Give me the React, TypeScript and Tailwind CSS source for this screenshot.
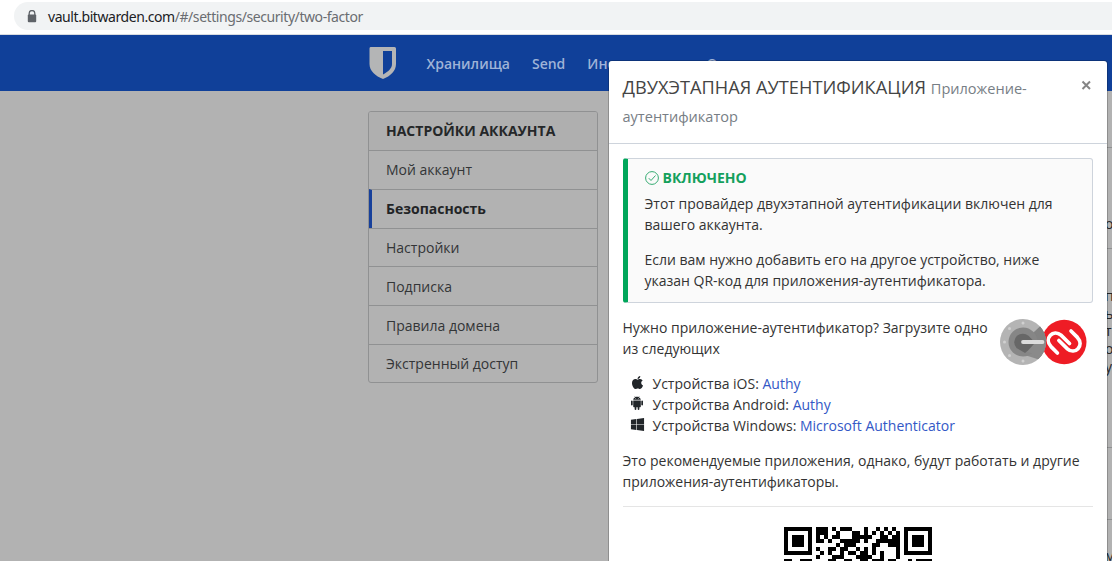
import React from "react";
import { FaApple, FaWindows } from "react-icons/fa";
import { AiFillAndroid } from "react-icons/ai";

const menu = ["Мой аккаунт", "Безопасность", "Настройки", "Подписка", "Правила домена", "Экстренный доступ"];

const qrRows = [
  "#######.###.#.###...#..#.#.#..#######",
  "#.....#.###..#...##.#.#.#.#.#.#.....#",
  "#.###.#.#.#.##...#####..##.##.#.###.#",
  "#.###.#.##.#..#####.#..######.#.###.#",
  "#.###.#......#.###....##..###.#.###.#",
  "#.....#.#..##.##..#.#.#.....#.#.....#",
  "#######..#.#..#.##.##.#.#...#.#######",
  "........#...###...####..#...#........",
  "##..###....##..##..##.###.##...#.####",
];

function QrCode() {
  return (
    <svg width="148" height="36" viewBox="0 0 37 9" shapeRendering="crispEdges" className="block">
      {qrRows.flatMap((row, y) =>
        row.split("").map((c, x) => (c === "#" ? <rect key={`${x}-${y}`} x={x} y={y} width="1" height="1" /> : null)),
      )}
    </svg>
  );
}

function AuthLogos() {
  return (
    <svg width="88" height="48" viewBox="0 0 88 48" className="block shrink-0">
      <circle cx="64.200" cy="24" r="22.300" fill="#ee1c25" />
      <circle cx="23" cy="24" r="23" fill="#b4b4b4" />
      <path d="M23 24L40 8.500A23 23 0 0 1 38 41.300L12 33Z" fill="#8a8a8a" />
      <path d="M31 24V17.500L40 8.500A23 23 0 0 1 46 24Z" fill="#828282" />
      <circle cx="23" cy="24" r="14.500" fill="#868686" />
      <path d="M16.500 30L31 24.500H46A23 23 0 0 1 38 41.300L31 35Z" fill="#8a8a8a" />
      <path d="M17 17.800A8.700 8.700 0 0 1 28.500 17.800L34 23.500V26L28 32.500L25 35L16.500 30A8.700 8.700 0 0 1 17 17.800Z" fill="#676767" />
      <g fill="#d0d0d0">
        <circle cx="23" cy="5" r="1.500" /><circle cx="9.500" cy="10.500" r="1.500" /><circle cx="4.500" cy="24" r="1.500" />
        <circle cx="9.500" cy="37.500" r="1.500" /><circle cx="23" cy="43" r="1.500" />
      </g>
      <path d="M23 24H42.500" stroke="#dcdcdc" strokeWidth="3.800" strokeLinecap="round" />
      <g fill="none" stroke="#fff" strokeWidth="3.700" strokeLinecap="round">
        <path d="M57.400 35L51 28.600C43.500 20.500 53.500 10.500 61 17.200L69.500 25.500" />
        <path d="M71 13L77.400 19.400C84.900 27.500 74.900 37.500 67.400 30.800L58.900 22.500" />
      </g>
    </svg>
  );
}

function Device({ icon, name, link }: { icon: React.ReactNode; name: string; link: string }) {
  return (
    <li className="flex h-[21px]">
      <span className="flex h-[18px] w-[30px] items-center justify-center pr-px text-[#212529]">{icon}</span>
      <span>{name}: <a className="text-[#3358c6]">{link}</a></span>
    </li>
  );
}

function TextLines({ lines }: { lines: string[] }) {
  return <>{lines.map((line, i) => <div key={i} className="h-[17.700px]">{line}</div>)}</>;
}

export default function App() {
  return (
    <div className="relative h-[561px] w-[1112px] overflow-hidden bg-[#b2b2b2] font-['Open_Sans','Noto_Sans',sans-serif] text-[14px] leading-[21px] text-[#333]">
      <div className="h-[35px] border-b border-[#d9dce0] bg-white pl-[14px] pt-[2px]">
        <div className="flex h-7 items-center rounded-l-full bg-[#f1f3f4] pl-[13px]">
          <svg width="10" height="13" viewBox="0 0 10 13" className="mr-[11px]">
            <path d="M2.200 5V3.300a2.800 2.800 0 0 1 5.600 0V5" fill="none" stroke="#5f6368" strokeWidth="1.300" />
            <rect x="0.800" y="4.600" width="8.400" height="7.600" rx="1" fill="#5f6368" />
          </svg>
          <span className="whitespace-nowrap font-['Noto_Sans',sans-serif] text-[14px] tracking-[-0.430px] text-[#6a6d71]">
            <span className="text-[#202124]">vault.bitwarden.com</span>/#/settings/security/two-factor
          </span>
        </div>
      </div>

      <header className="flex h-14 items-center bg-[#104099] pl-[369px] font-semibold text-[#9fb3d7]">
        <svg width="28" height="32" viewBox="0 0 28 32" className="mb-px mr-[29.500px]">
          <path fillRule="evenodd" d="M1.500 0h24q1.500 0 1.500 1.500V17c0 7-5.500 12-13 15C6.500 29 .5 24 .5 17V1.500Q.5 0 1.500 0ZM14 4V27.500c5-2.700 9-6 9-10.500V4Z" fill="#b4b5b6" />
        </svg>
        <nav className="flex gap-[22px] whitespace-nowrap">
          <span>Хранилища</span><span>Send</span><span>Инструменты</span><span>Отчеты</span>
        </nav>
      </header>

      <main className="flex justify-between pl-[368px]">
        <aside className="mt-5 h-[272px] w-[230px] overflow-hidden rounded-[3px] border border-[#909192]">
          <div className="flex h-[38px] items-center bg-[#afafaf] pb-[2px] pl-[17px] font-bold text-[#252729]">НАСТРОЙКИ АККАУНТА</div>
          {menu.map((m) => (
            <div key={m} className={m === "Безопасность"
              ? "flex h-[38.800px] items-center border-l-[3px] border-t border-l-[#17409b] border-t-[#909192] pl-[14px] font-bold text-[#222426]"
              : "flex h-[38.800px] items-center border-t border-[#909192] pl-[17px] text-[#333537]"}>{m}</div>
          ))}
        </aside>
        <section className="mt-[56px] flex w-[7px] flex-col overflow-hidden text-[14px] text-[#252729]">
          <div className="h-[101px] border-t border-[#909192] pt-[65px]">о</div>
          <div className="h-[199px] border-t border-[#909192] pt-[36px]"><TextLines lines={["п", "ь", "т", "о", "у"]} /></div>
          <div className="h-[72px] border-t border-[#909192]" />
          <div className="h-[42px] border-t border-[#909192] pt-[25px]">м</div>
        </section>
      </main>

      <div role="dialog" className="absolute left-[609px] top-[61px] h-[520px] w-[498px] rounded-t-[3px] bg-white shadow-[0_0_0_1px_rgba(0,0,0,0.2)]">
        <div className="flex h-[83px] items-start justify-between border-b border-[#ced4dc] pl-[13.500px] pr-[15px] pt-[13px]">
          <h5 className="w-[430px] text-[18.200px] font-normal leading-[27.500px] tracking-[0.020px] text-[#444]">
            ДВУХЭТАПНАЯ АУТЕНТИФИКАЦИЯ <small className="text-[14.560px] font-normal leading-none tracking-normal text-[#777e85]">Приложение-<br />аутентификатор</small>
          </h5>
          <svg width="11" height="11" viewBox="0 0 11 11" className="mt-[6px]">
            <path d="M1.500 1.500L9 9M9 1.500L1.500 9" stroke="#858585" strokeWidth="2" />
          </svg>
        </div>

        <div className="pl-[13.500px] pr-[14px] pt-[14px]">
          <div className="h-[145px] w-[470px] rounded-[3px] border border-l-[5px] border-[#ced4dc] border-l-[#00a65a] bg-[#fafafa] pl-[17px] pt-[8px]">
            <div className="mb-[5px] flex items-center font-bold text-[#14a05c]">
              <svg width="14" height="14" viewBox="0 0 14 14" fill="none" stroke="#36ab72" className="mr-1">
                <circle cx="7" cy="7" r="6.400" /><path d="M3.800 7.200L6 9.500L10.500 4.500" />
              </svg>
              ВКЛЮЧЕНО
            </div>
            <p>Этот провайдер двухэтапной аутентификации включен для<br />вашего аккаунта.</p>
            <p className="mt-[14px]">Если вам нужно добавить его на другое устройство, ниже<br />указан QR-код для приложения-аутентификатора.</p>
          </div>

          <div className="mt-[14px] flex h-[56px] justify-between">
            <p>Нужно приложение-аутентификатор? Загрузите одно<br />из следующих</p>
            <div className="mr-[5px] mt-px"><AuthLogos /></div>
          </div>

          <ul>
            <Device icon={<FaApple size={15} />} name="Устройства iOS" link="Authy" />
            <Device icon={<AiFillAndroid size={16} />} name="Устройства Android" link="Authy" />
            <Device icon={<FaWindows size={15} />} name="Устройства Windows" link="Microsoft Authenticator" />
          </ul>
          <p className="mt-[14px]">Это рекомендуемые приложения, однако, будут работать и другие<br />приложения-аутентификаторы.</p>
          <hr className="mb-5 mt-[14px] w-[470px] border-[#e5e5e5]" />
          <div className="pl-[161.500px]"><QrCode /></div>
        </div>
      </div>
    </div>
  );
}
